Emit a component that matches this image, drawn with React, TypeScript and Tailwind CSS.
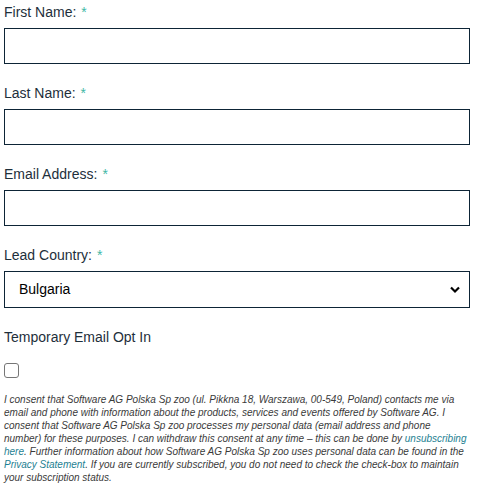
import React from "react";

type FieldProps = {
  label: string;
  required?: boolean;
  children: React.ReactNode;
};

const Field: React.FC<FieldProps> = ({ label, required = true, children }) => (
  <div className="mb-[19px]">
    <label className="block text-[14px] leading-[20px] text-[#1e2f3b] mb-[6px]">
      {label}
      {required && <span className="text-[#3fb8a6] ml-[5px]">*</span>}
    </label>
    {children}
  </div>
);

const inputCls =
  "block w-[466px] h-[36px] border border-[#0d2436] bg-white px-3 text-[14px] outline-none";

export default function App() {
  return (
    <div
      className="w-[480px] h-[496px] bg-white px-[4px] pt-[2px] overflow-hidden"
      style={{ fontFamily: '"Liberation Sans", Arial, sans-serif' }}
    >
      <form>
        <Field label="First Name:">
          <input type="text" className={inputCls} />
        </Field>
        <Field label="Last Name:">
          <input type="text" className={inputCls} />
        </Field>
        <Field label="Email Address:">
          <input type="email" className={inputCls} />
        </Field>
        <Field label="Lead Country:">
          <div className="relative w-[466px] h-[37px] border border-[#0d2436] bg-white flex items-center pl-[14px]">
            <span className="text-[14px] text-black">Bulgaria</span>
            <svg
              className="absolute right-[8px] top-[13px]"
              width="12"
              height="9"
              viewBox="0 0 12 9"
            >
              <path
                d="M2 2.5 L6 6.5 L10 2.5"
                fill="none"
                stroke="#000"
                strokeWidth="2.2"
              />
            </svg>
          </div>
        </Field>

        <div className="text-[14px] leading-[20px] text-[#1e2f3b]">
          Temporary Email Opt In
        </div>
        <div className="mt-[16px] w-[15px] h-[15px] border border-[#767676] rounded-[3px] bg-white" />

        <p className="mt-[15px] text-[10px] leading-[13px] italic text-[#3a3a3a] w-[466px]">
          I consent that Software AG Polska Sp zoo (ul. Pikkna 18, Warszawa,
          00-549, Poland) contacts me via email and phone with information about
          the products, services and events offered by Software AG. I consent
          that Software AG Polska Sp zoo processes my personal data (email
          address and phone number) for these purposes. I can withdraw this
          consent at any time – this can be done by{" "}
          <a className="text-[#1e7f92]">unsubscribing here</a>. Further
          information about how Software AG Polska Sp zoo uses personal data can
          be found in the <a className="text-[#1e7f92]">Privacy Statement</a>.
          If you are currently subscribed, you do not need to check the
          check-box to maintain your subscription status.
        </p>
      </form>
    </div>
  );
}
